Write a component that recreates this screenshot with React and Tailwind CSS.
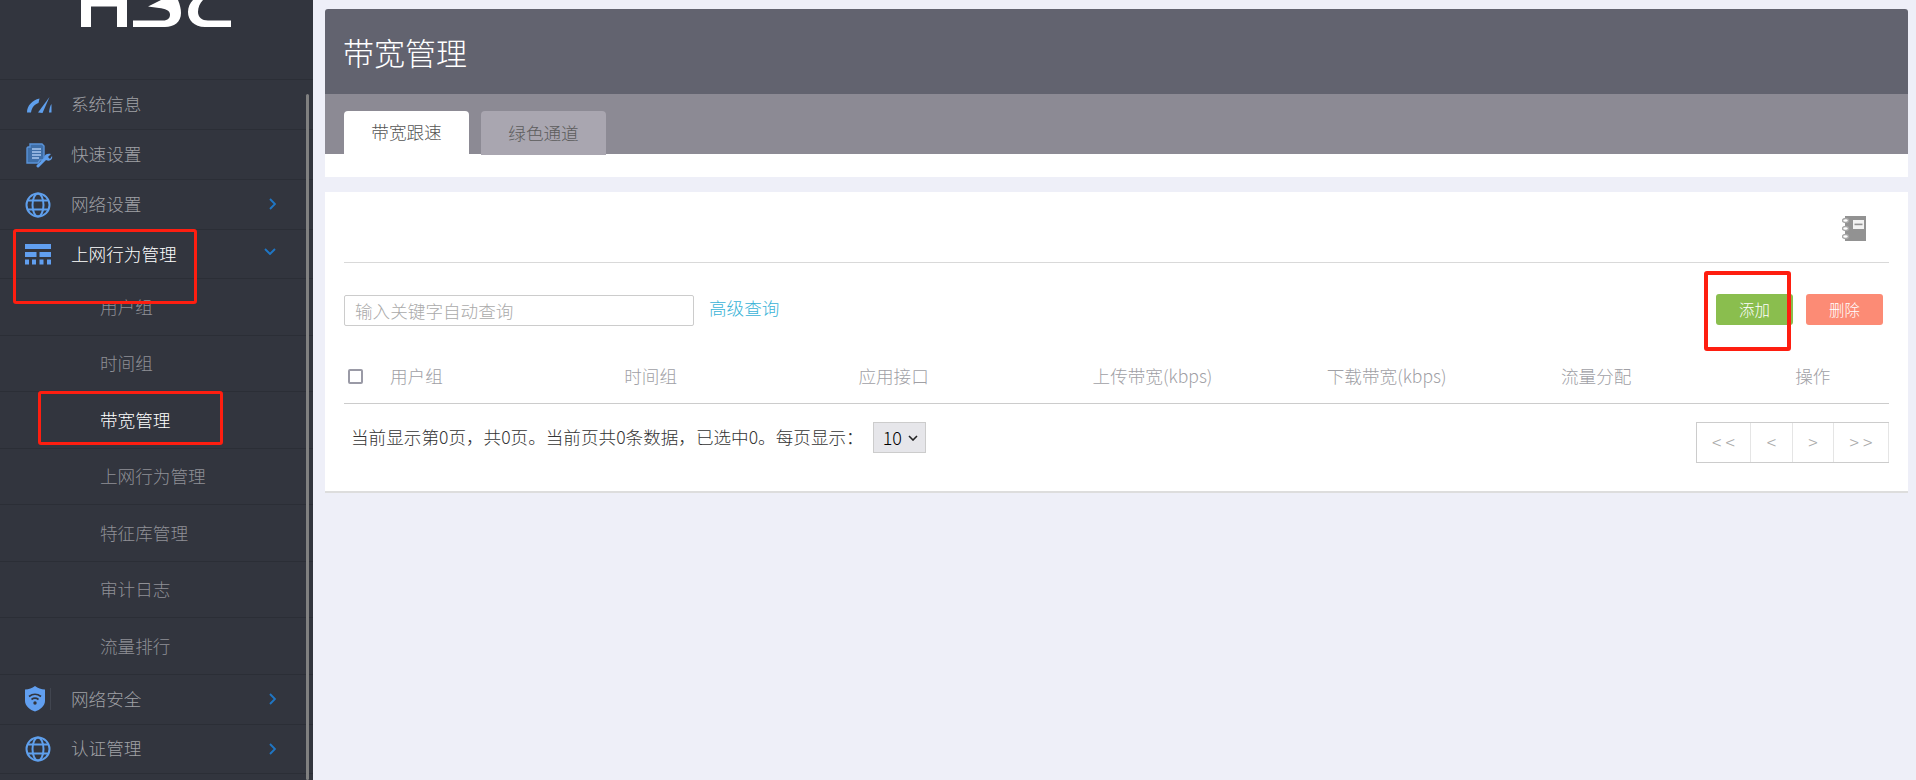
const topItems = [
  { label: '系统信息', icon: 'gauge', h: 'h-[50px]' },
  { label: '快速设置', icon: 'doc', h: 'h-[50px]' },
  { label: '网络设置', icon: 'globe', h: 'h-[50px]', arrow: 'right' },
  { label: '上网行为管理', icon: 'net', h: 'h-[49px]', arrow: 'down', active: true },
];
const subItems = [
  { label: '用户组' },
  { label: '时间组' },
  { label: '带宽管理', active: true },
  { label: '上网行为管理' },
  { label: '特征库管理' },
  { label: '审计日志' },
  { label: '流量排行' },
];
const bottomItems = [
  { label: '网络安全', icon: 'shield', h: 'h-[50px]', arrow: 'right' },
  { label: '认证管理', icon: 'globe', h: 'h-[49px]', arrow: 'right' },
];
const columns = ['用户组', '时间组', '应用接口', '上传带宽(kbps)', '下载带宽(kbps)', '流量分配'];

function Logo() {
  return (
    <svg width="170" height="40" viewBox="70 0 170 40" fill="#ffffff" className="block ml-[70px]">
      <path d="M81 0H127V27H117V6.5H91V27H81Z" />
      <path d="M133 20.5H163C168 20.5 170 18 170 14.5C170 10.5 165 8.5 159 8L148 6.5L161 0H178C180 5 181 9 181 13C181 22 174 27 165 27H133Z" />
      <path d="M231 27H205C194 27 188 20 188 12C188 7 190 3 193 0H203C200 3 198 7 198 12C198 17 202 20.5 208 20.5H231Z" />
    </svg>
  );
}

function SideIcon({ name }) {
  const c = '#5f9fec';
  if (name === 'gauge')
    return (
      <svg width="28" height="18" viewBox="0 0 28 18" fill={c} className="block">
        <path d="M2 16.5C2 10 7 4 14.5 2.5L13.5 7C10 8 7 11 6 16.5Z" />
        <path d="M13 16.5L24.5 1L17.5 17Z" />
        <path d="M24 16.5C24.5 12.5 25 10 26.5 8V16.5Z" />
      </svg>
    );
  if (name === 'doc')
    return (
      <svg width="28" height="26" viewBox="0 0 28 26" fill="none" className="block">
        <path d="M3 5H5V2H17L19 4V18H15L13 21H2V6Z" fill="#3f6fa8" stroke="#5a93d8" strokeWidth="1.4" />
        <path d="M7 7H16M7 10H16M7 13H16M7 16H14" stroke="#a9c8ee" strokeWidth="1.4" />
        <path d="M13 24L21 16" stroke="#5f9fec" strokeWidth="3" strokeLinecap="round" />
        <path d="M19 15C20 12 23 11 26 12L23 15L25 17L27 14C28 17 25 20 21 18Z" fill="#5f9fec" />
      </svg>
    );
  if (name === 'globe')
    return (
      <svg width="26" height="26" viewBox="0 0 26 26" fill="none" stroke={c} strokeWidth="2" className="block">
        <circle cx="13" cy="13" r="11.5" />
        <ellipse cx="13" cy="13" rx="5.5" ry="11.5" />
        <path d="M2.5 8.5H23.5M2.5 17.5H23.5" />
      </svg>
    );
  if (name === 'net')
    return (
      <svg width="26" height="21" viewBox="0 0 26 21" fill="#619ff0" className="block">
        <rect x="0" y="0" width="26" height="5" />
        <rect x="0" y="8" width="11.5" height="5" />
        <rect x="14.5" y="8" width="11.5" height="5" />
        <rect x="0" y="15.5" width="4" height="5" />
        <rect x="7" y="15.5" width="4" height="5" />
        <rect x="14.5" y="15.5" width="4" height="5" />
        <rect x="22" y="15.5" width="4" height="5" />
      </svg>
    );
  return (
    <svg width="27" height="26" viewBox="0 0 27 26" fill="none" className="block">
      <path d="M0 3.5C4 3.5 7 2 10 0C13 2 16 3.5 20 3.5V15C20 20 15 24 10 25.5C5 24 0 20 0 15Z" fill="#619ff0" />
      <path d="M4 10.5C8 7.5 12 7.5 16 10.5M6.5 13.5C9 11.7 11 11.7 13.5 13.5" stroke="#32353e" strokeWidth="1.7" fill="none" />
      <circle cx="10" cy="17" r="1.7" fill="#32353e" />
      <path d="M25.5 2V24" stroke="#41454f" strokeWidth="1" />
    </svg>
  );
}

function Arrow({ dir }) {
  const d = dir === 'down' ? 'M1 1L6 6L11 1' : 'M1 1L6 6L1 11';
  const w = dir === 'down' ? 12 : 7;
  const h = dir === 'down' ? 7 : 12;
  return (
    <svg width={w} height={h} viewBox={dir === 'down' ? '0 0 12 7' : '0 0 7 12'} fill="none" stroke="#1f76c4" strokeWidth="1.9" className="block">
      <path d={d} />
    </svg>
  );
}

function MainRow({ item }) {
  return (
    <div className={`relative flex items-center border-t border-[#2b2e36] pl-[25px] ${item.h}`}>
      <div className="w-[46px] shrink-0">
        <SideIcon name={item.icon} />
      </div>
      <span className={`text-[17.6px] font-light ${item.active ? 'text-white' : 'text-[#a0a1a6]'}`}>{item.label}</span>
      {item.arrow === 'right' && (
        <span className="absolute left-[269px] top-[18px]">
          <Arrow dir="right" />
        </span>
      )}
      {item.arrow === 'down' && (
        <span className="absolute left-[264px] top-[18px]">
          <Arrow dir="down" />
        </span>
      )}
    </div>
  );
}

function Notebook() {
  return (
    <svg width="24" height="25" viewBox="0 0 24 25" className="block">
      <rect x="3" y="0" width="21" height="25" fill="#929292" />
      <rect x="11" y="4" width="11" height="9" fill="#f2f2f2" />
      <rect x="12.5" y="7.6" width="8" height="1.6" fill="#929292" />
      <g fill="#ffffff" stroke="#a8a8a8" strokeWidth="1.4">
        <ellipse cx="3.5" cy="4.5" rx="3" ry="2" />
        <ellipse cx="3.5" cy="12.5" rx="3" ry="2" />
        <ellipse cx="3.5" cy="20.5" rx="3" ry="2" />
      </g>
    </svg>
  );
}

export default function App() {
  return (
    <div className="relative flex h-[780px] overflow-hidden bg-[#eeeff8] [font-family:'Noto_Sans_CJK_SC','Liberation_Sans',sans-serif]">
      <aside className="relative h-[780px] w-[313px] shrink-0 overflow-hidden bg-[#32353e]">
        <div className="h-[79px]">
          <Logo />
        </div>
        {topItems.map((item) => (
          <MainRow key={item.label} item={item} />
        ))}
        {subItems.map((item, i) => (
          <div key={i} className="flex h-[56.5px] items-center border-t border-[#2b2e36] pl-[100px]">
            <span className={`text-[17.6px] font-light ${item.active ? 'text-white' : 'text-[#8f9096]'}`}>{item.label}</span>
          </div>
        ))}
        {bottomItems.map((item) => (
          <MainRow key={item.label} item={item} />
        ))}
        <div className="border-t border-[#2b2e36]" />
        <div className="absolute bottom-0 left-[306px] top-[94px] w-[3px] rounded-full bg-[#808080]" />
      </aside>

      <main className="min-w-0 flex-1 pl-[12px] pr-[8px] pt-[9px]">
        <section>
          <div className="flex h-[85px] items-center rounded-t-[3px] bg-[#62636f] pl-[18px] pt-[2px]">
            <h1 className="text-[31px] font-light text-white">带宽管理</h1>
          </div>
          <div className="flex h-[60px] items-start gap-[12px] bg-[#8c8a94] pl-[19px] pt-[17px]">
            <div className="flex h-[43px] w-[125px] items-center justify-center rounded-t-[4px] bg-white text-[17.6px] font-light text-[#555555]">
              带宽跟速
            </div>
            <div className="flex h-[44px] w-[125px] items-center justify-center rounded-t-[4px] bg-[#a9a6b0] text-[17.6px] font-light text-[#5c5c5c]">
              绿色通道
            </div>
          </div>
          <div className="h-[23px] bg-white" />
        </section>

        <section className="mt-[15px] h-[301px] border-b-2 border-[#dddddd] bg-white px-[19px]">
          <div className="flex h-[71px] items-center justify-end border-b border-[#d9d9d9] pr-[23px] pt-[3px]">
            <Notebook />
          </div>

          <div className="mt-[32px] flex h-[31px] items-center">
            <input
              readOnly
              placeholder="输入关键字自动查询"
              className="h-[31px] w-[350px] rounded-[2px] border border-[#cccccc] bg-white pl-[10px] text-[17.6px] font-light outline-none placeholder:text-[#aaaaaa]"
            />
            <a className="mb-[4px] ml-[15px] text-[17.6px] font-light text-[#39b3d7]">高级查询</a>
            <div className="-mt-[2px] ml-auto mr-[6px] flex gap-[13px]">
              <button className="h-[31px] w-[77px] rounded-[3px] bg-[#8abe4e] text-[15.4px] font-light text-white">添加</button>
              <button className="h-[31px] w-[77px] rounded-[3px] bg-[#fc8b75] text-[15.4px] font-light text-white">删除</button>
            </div>
          </div>

          <div className="mt-[27px] flex h-[51px] items-center border-b border-[#cccccc] pb-[4px]">
            <span className="ml-[4px] h-[15px] w-[15px] shrink-0 rounded-[2px] border-2 border-[#9a9aa6] bg-white" />
            <div className="ml-[27px] flex flex-1 font-light">
              {columns.map((c) => (
                <span key={c} className="w-[234.2px] shrink-0 text-[17.6px] text-[#a0a0a5]">{c}</span>
              ))}
              <span className="text-[17.6px] text-[#a0a0a5]">操作</span>
            </div>
          </div>

          <div className="flex items-start justify-between pt-[18px]">
            <div className="flex h-[31px] items-center pl-[7px] text-[17.6px] font-light text-[#333333]">
              <span>当前显示第0页，共0页。当前页共0条数据，已选中0。每页显示：</span>
              <div className="relative ml-[9px] h-[31px] w-[53px]">
                <select
                  className="h-[31px] w-[53px] appearance-none border border-[#cccccc] bg-[#e6e6ea] pl-[9px] text-[18px] text-black outline-none"
                  defaultValue="10"
                >
                  <option>10</option>
                </select>
                <svg width="10" height="6" viewBox="0 0 10 6" fill="none" stroke="#222222" strokeWidth="1.6" className="pointer-events-none absolute left-[35px] top-[13px]">
                  <path d="M1 1L5 5L9 1" />
                </svg>
              </div>
            </div>
            <div className="flex h-[41px] border-y border-l border-[#cccccc] text-[17.6px] font-light tracking-[4px] text-[#aaaaaa]">
              <span className="flex w-[54px] items-center justify-center border-r border-[#e5e5e5] pl-[4px]">&lt;&lt;</span>
              <span className="flex w-[42px] items-center justify-center border-r border-[#e5e5e5] pl-[4px]">&lt;</span>
              <span className="flex w-[41px] items-center justify-center border-r border-[#e5e5e5] pl-[4px]">&gt;</span>
              <span className="flex w-[55px] items-center justify-center border-r border-[#e5e5e5] pl-[4px]">&gt;&gt;</span>
            </div>
          </div>
        </section>
      </main>

      <div className="pointer-events-none absolute left-[13px] top-[229px] h-[75px] w-[184px] rounded-[3px] border-[3px] border-[#fe1e10]" />
      <div className="pointer-events-none absolute left-[38px] top-[391px] h-[54px] w-[185px] rounded-[3px] border-[3px] border-[#fe1e10]" />
      <div className="pointer-events-none absolute left-[1704px] top-[271px] h-[80px] w-[87px] rounded-[3px] border-[4px] border-[#fe1e10]" />
    </div>
  );
}
